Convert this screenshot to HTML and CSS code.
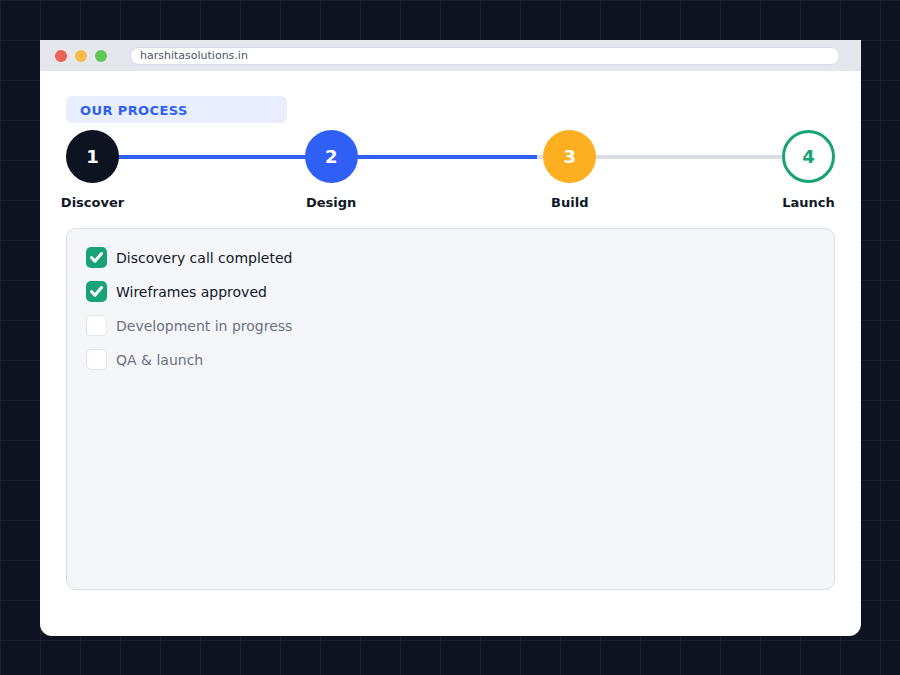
FILE: index.html
```html
<!DOCTYPE html>
<html>
<head>
<meta charset="utf-8">
<link rel="stylesheet" href="styles.css">
</head>
<body>
<div class="window">
  <div class="titlebar">
    <span class="dot red"></span>
    <span class="dot yellow"></span>
    <span class="dot green"></span>
    <div class="address">harshitasolutions.in</div>
  </div>
  <div class="content">
    <div class="badge">OUR PROCESS</div>
    <div class="steps">
      <div class="track"><div class="fill" style="width:62%"></div></div>
      <div class="step">
        <div class="circle c-dark">1</div>
        <div class="label">Discover</div>
      </div>
      <div class="step">
        <div class="circle c-blue">2</div>
        <div class="label">Design</div>
      </div>
      <div class="step">
        <div class="circle c-amber">3</div>
        <div class="label">Build</div>
      </div>
      <div class="step">
        <div class="circle c-outline">4</div>
        <div class="label">Launch</div>
      </div>
    </div>
    <div class="card">
      <div class="item done">
        <span class="box checked"><svg viewBox="0 0 21 21" width="21" height="21"><path d="M5.5 10.5 L9 14.2 L15.5 6.5" fill="none" stroke="#fff" stroke-width="3" stroke-linecap="round" stroke-linejoin="round"/></svg></span>
        <span class="text">Discovery call completed</span>
      </div>
      <div class="item done">
        <span class="box checked"><svg viewBox="0 0 21 21" width="21" height="21"><path d="M5.5 10.5 L9 14.2 L15.5 6.5" fill="none" stroke="#fff" stroke-width="3" stroke-linecap="round" stroke-linejoin="round"/></svg></span>
        <span class="text">Wireframes approved</span>
      </div>
      <div class="item">
        <span class="box"></span>
        <span class="text">Development in progress</span>
      </div>
      <div class="item">
        <span class="box"></span>
        <span class="text">QA &amp; launch</span>
      </div>
    </div>
  </div>
</div>
</body>
</html>
```
FILE: styles.css
```css
html, body {
  margin: 0;
  padding: 0;
}
body {
  width: 900px;
  height: 675px;
  overflow: hidden;
  background-color: #0d1321;
  background-image:
    linear-gradient(to right, #1a2130 1px, transparent 1px),
    linear-gradient(to bottom, #1a2130 1px, transparent 1px);
  background-size: 40px 40px;
  font-family: "DejaVu Sans", sans-serif;
  padding-top: 40px;
  box-sizing: border-box;
}
.window {
  margin-left: 40px;
  width: 821px;
  height: 596px;
  background: #ffffff;
  border-radius: 0 0 12px 12px;
  overflow: hidden;
  display: flex;
  flex-direction: column;
}
.titlebar {
  height: 31px;
  background: #e5e7ec;
  display: flex;
  align-items: center;
  padding: 0 21px 0 15px;
  box-sizing: border-box;
  flex: none;
}
.dot {
  width: 12px;
  height: 12px;
  border-radius: 50%;
  margin-right: 8px;
  flex: none;
}
.red { background: #ec6158; }
.yellow { background: #f5bb4c; }
.green { background: #5fc553; margin-right: 23px; }
.address {
  flex: 1;
  height: 18px;
  box-sizing: border-box;
  background: #ffffff;
  border: 1px solid #d5dbe6;
  border-radius: 9px;
  font-size: 11px;
  line-height: 16px;
  color: #4b5563;
  padding-left: 9px;
}
.content {
  padding: 25px 26px 0 26px;
  display: flex;
  flex-direction: column;
}
.badge {
  width: 221px;
  height: 27px;
  box-sizing: border-box;
  background: #e8eefd;
  border-radius: 6px;
  color: #2f5ff5;
  font-weight: bold;
  font-size: 13px;
  line-height: 27px;
  padding: 1px 0 0 14px;
  letter-spacing: 0.4px;
}
.steps {
  position: relative;
  margin-top: 7px;
  display: flex;
  justify-content: space-between;
}
.track {
  position: absolute;
  left: 26px;
  right: 26px;
  top: 24.5px;
  height: 4px;
  background: #d9dde6;
}
.fill {
  height: 100%;
  background: #2f5ff5;
}
.step {
  position: relative;
  width: 53px;
  display: flex;
  flex-direction: column;
  align-items: center;
}
.circle {
  width: 53px;
  height: 53px;
  border-radius: 50%;
  box-sizing: border-box;
  display: flex;
  align-items: center;
  justify-content: center;
  color: #ffffff;
  font-weight: bold;
  font-size: 18px;
}
.c-dark { background: #0d1321; }
.c-blue { background: #2f5ff5; }
.c-amber { background: #fbaf21; }
.c-outline { background: #ffffff; border: 3px solid #17a375; color: #17a375; }
.label {
  margin-top: 12px;
  white-space: nowrap;
  font-weight: bold;
  font-size: 13px;
  line-height: 16px;
  color: #111827;
}
.card {
  margin-top: 17px;
  height: 362px;
  box-sizing: border-box;
  background: #f5f6fa;
  border: 1px solid #d9dde6;
  border-radius: 10px;
  padding: 18px 19px;
  display: flex;
  flex-direction: column;
  gap: 13px;
}
.item {
  display: flex;
  align-items: center;
  height: 21px;
}
.box {
  width: 21px;
  height: 21px;
  box-sizing: border-box;
  border-radius: 5px;
  background: #ffffff;
  border: 1px solid #e2e5ea;
  margin-right: 9px;
  flex: none;
  display: flex;
}
.box.checked {
  background: #17a375;
  border: none;
}
.text {
  font-size: 14px;
  color: #6b7280;
}
.done .text {
  color: #111827;
}
```
